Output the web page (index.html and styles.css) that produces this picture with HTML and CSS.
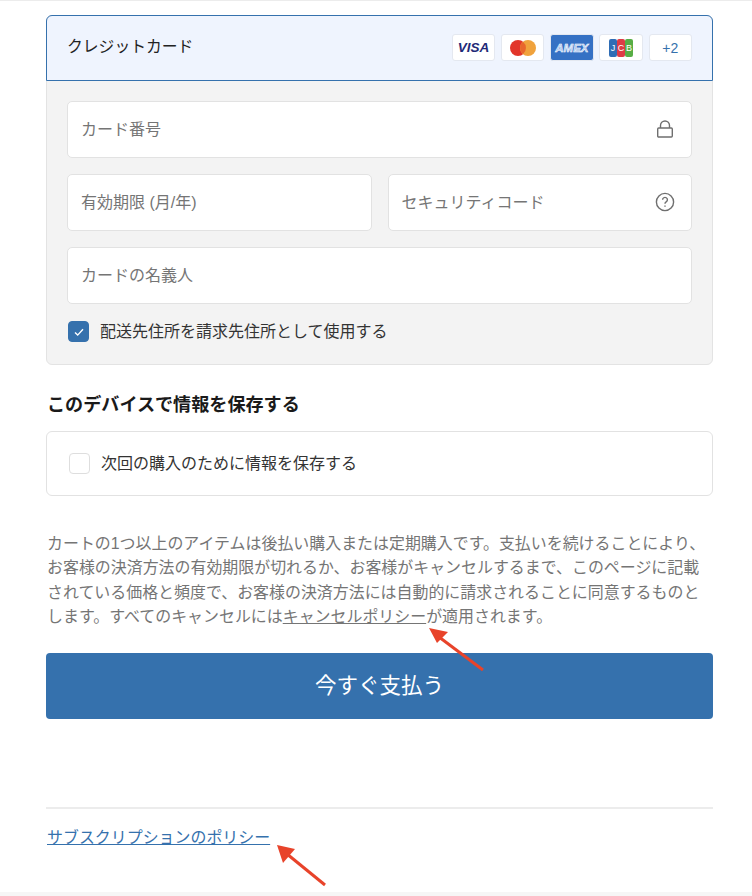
FILE: index.html
```html
<!DOCTYPE html>
<html lang="ja">
<head>
    <meta charset="UTF-8">
    <title>お支払い</title>
    <link rel="stylesheet" href="styles.css">
</head>
<body>
    <div class="page">
        <!-- クレジットカード -->
        <div class="pay_box">
            <div class="pay_head">
                <span class="pay_title">クレジットカード</span>
                <div class="brands">
                    <div class="brand">
                        <span class="visa">VISA</span>
                    </div>
                    <div class="brand">
                        <svg width="34" height="20" viewBox="0 0 34 20">
                            <circle cx="12" cy="10" r="8" fill="#e2352a"/>
                            <circle cx="22" cy="10" r="8" fill="#f0a23c"/>
                            <path d="M17 3.8a8 8 0 0 1 0 12.4a8 8 0 0 1 0-12.4z" fill="#e8662c"/>
                        </svg>
                    </div>
                    <div class="brand amex">
                        <span>AMEX</span>
                    </div>
                    <div class="brand">
                        <div class="jcb">
                            <span class="jcb_j">J</span>
                            <span class="jcb_c">C</span>
                            <span class="jcb_b">B</span>
                        </div>
                    </div>
                    <div class="brand more">+2</div>
                </div>
            </div>
            <div class="pay_body">
                <div class="field">
                    <span>カード番号</span>
                    <svg width="18" height="18" viewBox="0 0 18 18" fill="none" stroke="#6f6f6f" stroke-width="1.4">
                        <rect x="1.7" y="8" width="14.6" height="9" rx="1"/>
                        <path d="M4.5 8V5.5a4.5 4.5 0 0 1 9 0V8"/>
                    </svg>
                </div>
                <div class="field_row">
                    <div class="field"><span>有効期限 (月/年)</span></div>
                    <div class="field">
                        <span>セキュリティコード</span>
                        <svg class="help" width="20" height="20" viewBox="0 0 20 20" fill="none" stroke="#6f6f6f" stroke-width="1.4">
                            <circle cx="10" cy="10" r="8.6"/>
                            <path d="M7.6 7.8a2.4 2.4 0 1 1 3.6 2.1c-.8.5-1.2 1-1.2 1.9"/>
                            <path d="M10 13.6v1.2"/>
                        </svg>
                    </div>
                </div>
                <div class="field"><span>カードの名義人</span></div>
                <label class="check_line">
                    <span class="check on">
                        <svg width="14" height="14" viewBox="0 0 14 14" fill="none" stroke="#fff" stroke-width="1.4">
                            <path d="M3 7.4l2.7 2.7L11 4.2"/>
                        </svg>
                    </span>
                    <span class="check_text">配送先住所を請求先住所として使用する</span>
                </label>
            </div>
        </div>

        <!-- 情報を保存 -->
        <h2 class="save_title">このデバイスで情報を保存する</h2>
        <label class="save_box">
            <span class="check"></span>
            <span class="check_text">次回の購入のために情報を保存する</span>
        </label>

        <p class="notice">カートの1つ以上のアイテムは後払い購入または定期購入です。支払いを続けることにより、<br>お客様の決済方法の有効期限が切れるか、お客様がキャンセルするまで、このページに記載<br>されている価格と頻度で、お客様の決済方法には自動的に請求されることに同意するものと<br>します。すべてのキャンセルには<a href="#">キャンセルポリシー</a>が適用されます。</p>

        <button class="pay_btn">今すぐ支払う</button>

        <div class="foot">
            <a href="#">サブスクリプションのポリシー</a>
        </div>
    </div>
    <div class="bottom_bar"></div>

    <!-- 赤い矢印 -->
    <svg class="arrows" width="752" height="896" viewBox="0 0 752 896">
        <path d="M483 670L439 637" stroke="#e8432a" stroke-width="3" fill="none"/>
        <path d="M429 628L448 632L437 643z" fill="#e8432a"/>
        <path d="M325 885L287 854" stroke="#e8432a" stroke-width="3" fill="none"/>
        <path d="M277 845L295 849L283 863z" fill="#e8432a"/>
    </svg>
</body>
</html>
```
FILE: styles.css
```css
*{
    margin: 0;
    padding: 0;
    box-sizing: border-box;
}
body{
    font-family: "Liberation Sans", "Noto Sans CJK JP", sans-serif;
    background: #fff;
    color: #333;
    position: relative;
    height: 896px;
    overflow: hidden;
}
.page{
    border-top: 1px solid #ececec;
    padding: 14px 39px 0 46px;
}
.pay_box{
    border: 1px solid #e3e3e3;
    border-radius: 6px;
    background: #f3f3f3;
    height: 350px;
}
.pay_head{
    height: 66px;
    margin: -1px -1px 0;
    padding: 0 20px 0 20px;
    display: flex;
    align-items: center;
    justify-content: space-between;
    background: #eff4fe;
    border: 1px solid #3571ad;
    border-radius: 6px 6px 0 0;
    font-size: 15.8px;
    color: #222;
}
.pay_title{
    padding-bottom: 5px;
}
.brands{
    display: flex;
    gap: 5.7px;
    padding-bottom: 1px;
}
.brand{
    width: 43.5px;
    height: 27px;
    background: #fff;
    border: 1px solid #e4e8f0;
    border-radius: 3px;
    display: flex;
    align-items: center;
    justify-content: center;
}
.visa{
    font-size: 13.5px;
    font-weight: bold;
    font-style: italic;
    color: #1f2a78;
}
.amex{
    background: #3571c4;
    color: #a9c4ee;
    font-size: 11.5px;
    font-weight: bold;
    font-style: italic;
    -webkit-text-stroke: 0.5px #fff;
}
.jcb{
    display: flex;
}
.jcb span{
    width: 8px;
    height: 18px;
    border-radius: 2px;
    color: #fff;
    font-size: 9px;
    line-height: 18px;
    text-align: center;
}
.jcb_j{
    background: #2f6db5;
}
.jcb_c{
    background: #dd3b45;
}
.jcb_b{
    background: #57ad45;
}
.more{
    font-size: 14px;
    color: #3571ad;
}
.pay_body{
    padding: 20px 20px 0;
    display: flex;
    flex-direction: column;
    gap: 16px;
}
.field_row{
    display: flex;
    gap: 16px;
}
.field_row .field{
    flex: 1;
}
.field{
    height: 57px;
    padding: 0 17px 3px 13px;
    background: #fff;
    border: 1px solid #e2e2e2;
    border-radius: 5px;
    display: flex;
    align-items: center;
    justify-content: space-between;
    font-size: 16px;
    color: #757575;
}
.field svg{
    margin-top: 2px;
}
.field svg.help{
    margin-top: 1px;
    margin-right: -1px;
}
.check_line{
    height: 21px;
    margin-top: 1px;
    display: flex;
    align-items: center;
    gap: 11px;
    font-size: 16px;
    color: #333;
}
.check_text{
    padding-bottom: 4px;
}
.check{
    width: 21px;
    height: 21px;
    margin-left: 1px;
    background: #fff;
    border: 1px solid #dedede;
    border-radius: 4px;
    display: flex;
    align-items: center;
    justify-content: center;
}
.check.on{
    background: #3571ad;
    border-color: #3571ad;
}
.save_title{
    margin-top: 28px;
    padding-left: 1px;
    font-size: 18.1px;
    line-height: 24px;
    color: #1a1a1a;
}
.save_box{
    height: 65px;
    margin-top: 14px;
    padding: 0 21px;
    border: 1px solid #e2e2e2;
    border-radius: 6px;
    display: flex;
    align-items: center;
    gap: 11px;
    font-size: 16px;
    color: #333;
}
.notice{
    margin-top: 36px;
    padding-left: 1px;
    font-size: 15.95px;
    line-height: 24.3px;
    color: #757575;
    white-space: nowrap;
}
.notice a{
    color: #757575;
}
.pay_btn{
    display: block;
    width: 100%;
    height: 66px;
    margin-top: 23.4px;
    padding-bottom: 4px;
    background: #3571ad;
    border: 0;
    border-radius: 4px;
    color: #fff;
    font-family: inherit;
    font-size: 21.5px;
}
.foot{
    margin-top: 88px;
    padding-top: 19px;
    padding-left: 1px;
    border-top: 2px solid #ececec;
    font-size: 15.95px;
    line-height: 20px;
}
.foot a{
    color: #3571ad;
}
.bottom_bar{
    position: absolute;
    left: 0;
    right: 0;
    bottom: 0;
    height: 4px;
    background: #f6f6f6;
}
.arrows{
    position: absolute;
    left: 0;
    top: 0;
    pointer-events: none;
}
```
